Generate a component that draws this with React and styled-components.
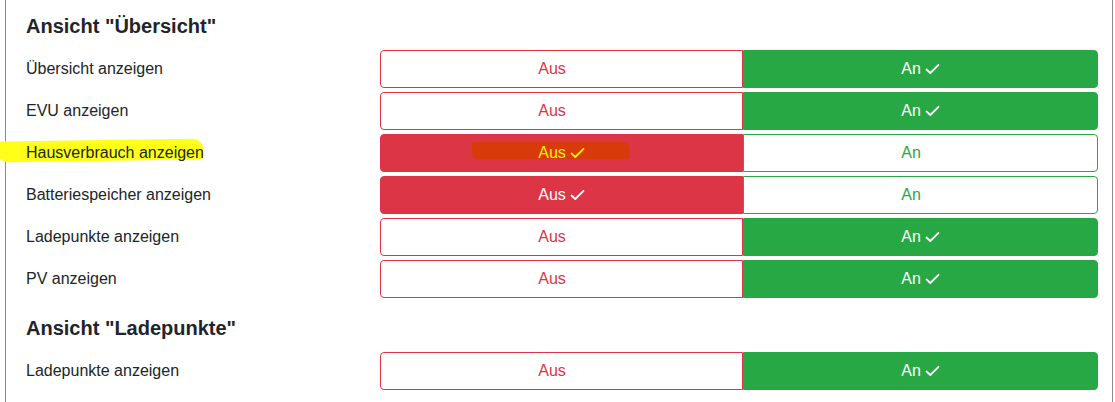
import React from 'react'
import styled, { createGlobalStyle } from 'styled-components'

const GlobalStyle = createGlobalStyle`
  body {
    margin: 0;
    background: #fff;
    font-family: "Liberation Sans", Arial, sans-serif;
    color: #212529;
  }
`

const Card = styled.div`
  margin: -10px 0 0 5px;
  width: 1108px;
  height: 430px;
  box-sizing: border-box;
  border: 1px solid #8a8a8a;
  padding: 23px 14px 0 20px;
  position: relative;
`

const Heading = styled.h5`
  margin: 0 0 12px;
  font-size: 20px;
  font-weight: 700;
  line-height: 24px;
  color: #212529;
`

const Section = styled.section`
  margin-bottom: 18px;
`

const Row = styled.div`
  display: grid;
  grid-template-columns: 354px 363px 355px;
  height: 38px;
  margin-bottom: 4px;
  align-items: center;
`

const Label = styled.div`
  position: relative;
  font-size: 16px;
  line-height: 20px;
  color: #212529;
`

const LabelText = styled.span`
  position: relative;
`

const Highlighter = styled.span`
  position: absolute;
  left: -27px;
  top: -3px;
  width: 204px;
  height: 21px;
  background: #ffff1a;
  border-radius: 2px 10px 3px 8px;
  transform: rotate(-0.8deg);
`

const Btn = styled.button`
  position: relative;
  height: 38px;
  box-sizing: border-box;
  border: 1px solid ${p => p.$color};
  background: ${p => (p.$active ? p.$color : '#fff')};
  color: ${p => (p.$active ? '#fff' : p.$color)};
  font-family: inherit;
  font-size: 16px;
  display: flex;
  align-items: center;
  justify-content: center;
  padding: 0;
  border-radius: ${p => (p.$side === 'left' ? '4px 0 0 4px' : '0 4px 4px 0')};
`

const BtnInner = styled.span`
  position: relative;
  display: flex;
  align-items: center;
  gap: 4px;
  color: ${p => p.$tint || 'inherit'};
`

const CheckSlot = styled.span`
  display: flex;
  visibility: ${p => (p.$shown ? 'visible' : 'hidden')};
`

const Scribble = styled.span`
  position: absolute;
  left: 91px;
  top: 7px;
  width: 158px;
  height: 17px;
  background: #d93a0a;
  border-radius: 2px 8px 3px 5px;
`

const Check = () => (
  <svg width="15" height="12" viewBox="0 0 15 12" fill="none">
    <path d="M1.5 6.5 L5.3 10 L13.5 1.8" stroke="currentColor" strokeWidth="1.8" strokeLinecap="round" strokeLinejoin="round" />
  </svg>
)

const RED = '#dc3545'
const GREEN = '#28a745'

const SwitchRow = ({ label, on, marked }) => (
  <Row>
    <Label>
      {marked && <Highlighter />}
      <LabelText>{label}</LabelText>
    </Label>
    <Btn $color={RED} $active={!on} $side="left">
      {marked && <Scribble />}
      <BtnInner $tint={marked ? '#ffee00' : null}>
        Aus
        <CheckSlot $shown={!on}><Check /></CheckSlot>
      </BtnInner>
    </Btn>
    <Btn $color={GREEN} $active={on} $side="right">
      <BtnInner>
        An
        <CheckSlot $shown={on}><Check /></CheckSlot>
      </BtnInner>
    </Btn>
  </Row>
)

export default function App() {
  return (
    <>
      <GlobalStyle />
      <Card>
        <Section>
          <Heading>Ansicht "Übersicht"</Heading>
          <SwitchRow label="Übersicht anzeigen" on />
          <SwitchRow label="EVU anzeigen" on />
          <SwitchRow label="Hausverbrauch anzeigen" on={false} marked />
          <SwitchRow label="Batteriespeicher anzeigen" on={false} />
          <SwitchRow label="Ladepunkte anzeigen" on />
          <SwitchRow label="PV anzeigen" on />
        </Section>
        <Section>
          <Heading>Ansicht "Ladepunkte"</Heading>
          <SwitchRow label="Ladepunkte anzeigen" on />
        </Section>
      </Card>
    </>
  )
}
